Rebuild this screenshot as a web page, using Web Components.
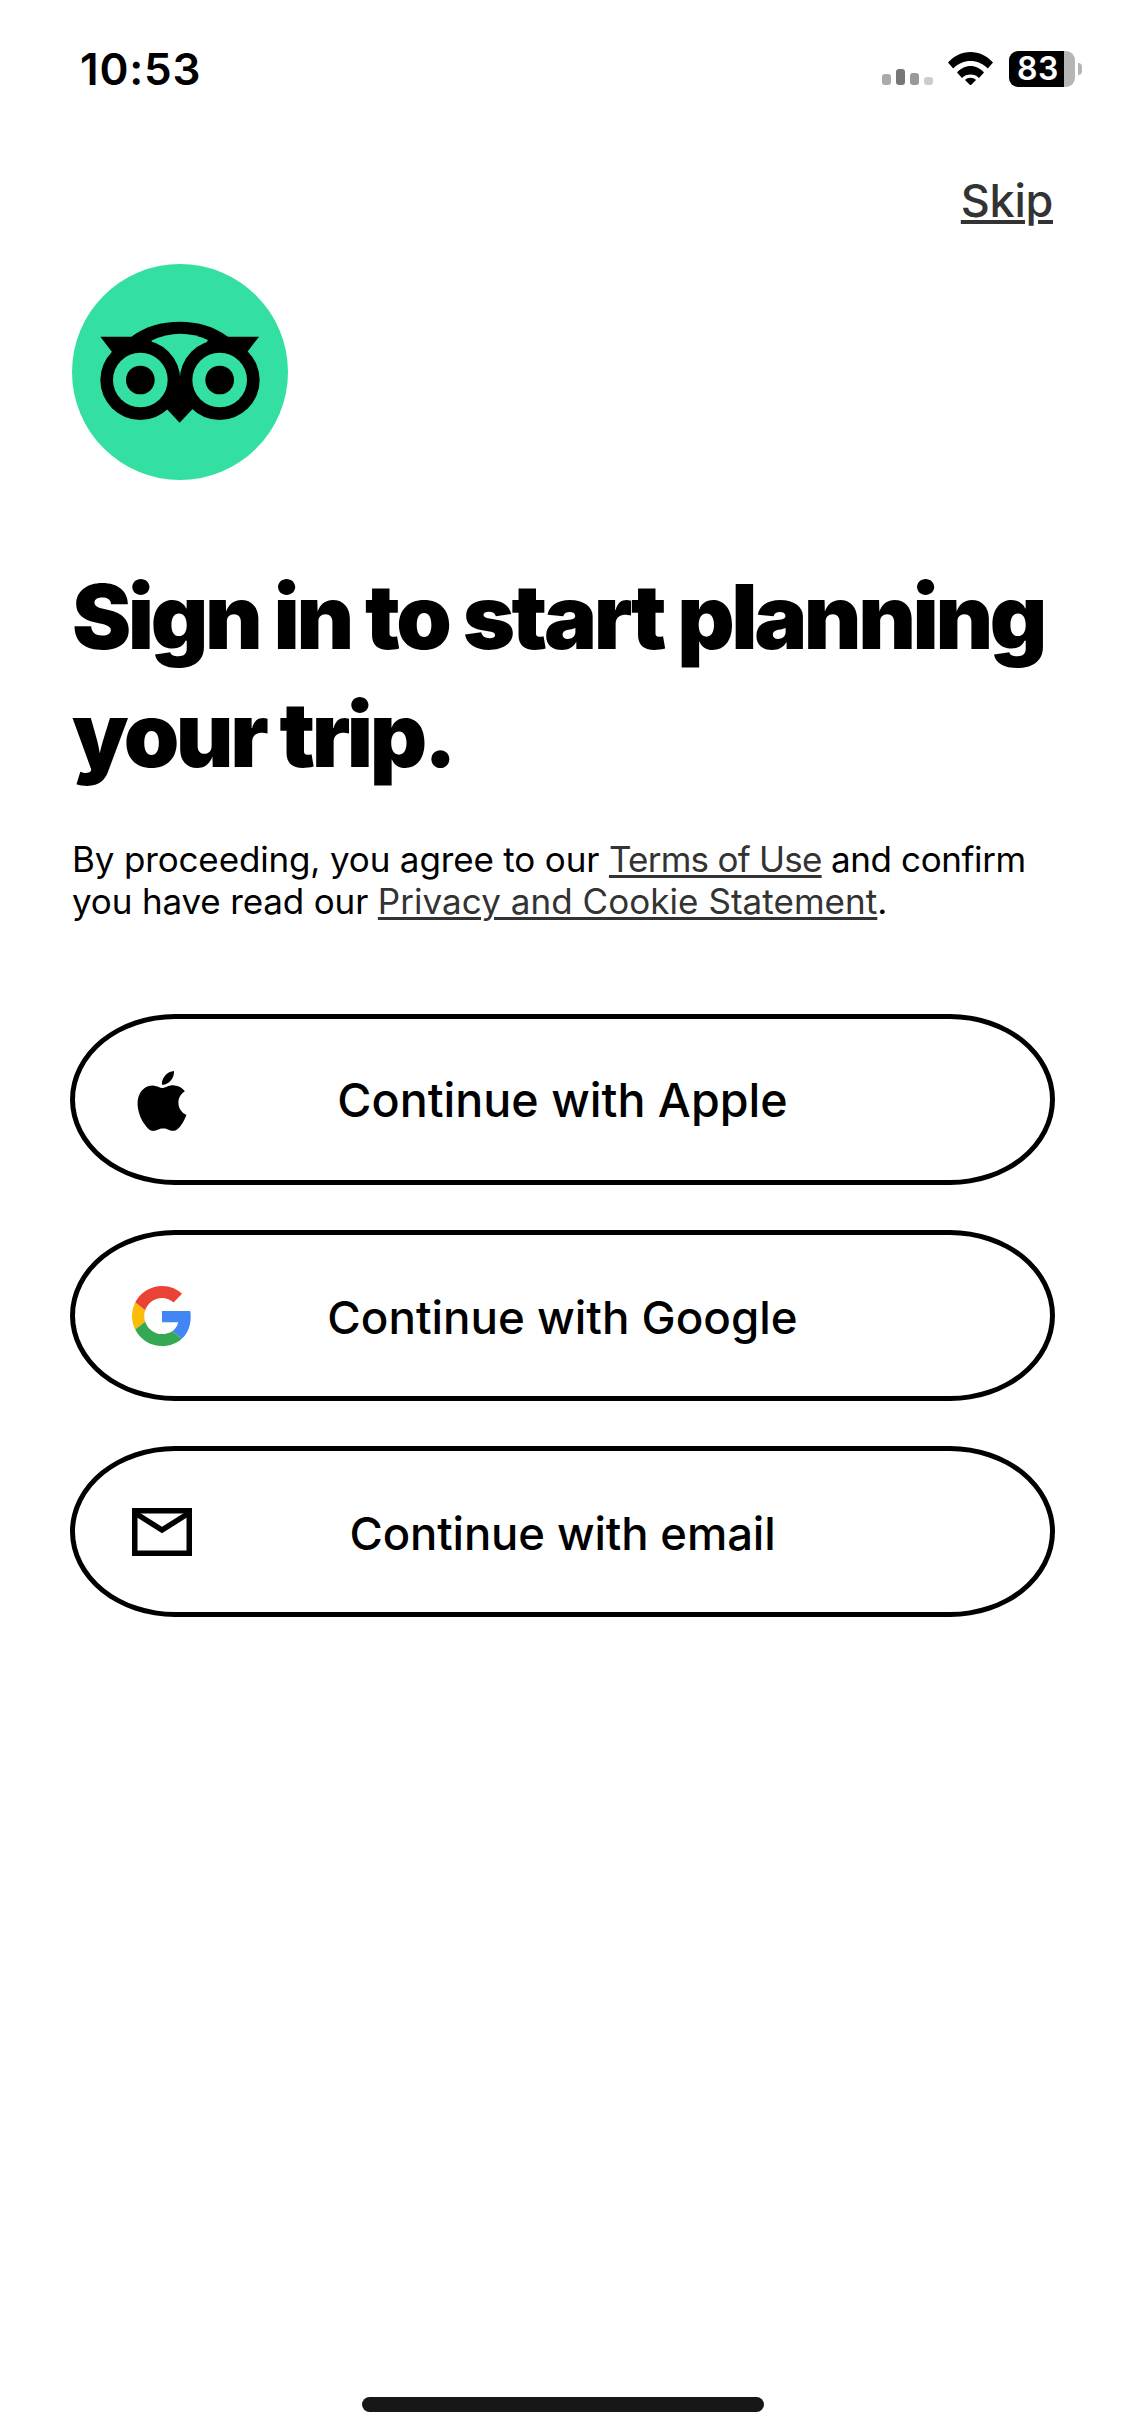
<!DOCTYPE html>
<html lang="en"><head><meta charset="utf-8"><title>Sign in</title>
<style>
html,body{margin:0;padding:0;background:#fff}
body{font-family:Inter,"Noto Sans",sans-serif;color:#000}
a{color:#333;text-decoration:underline;text-decoration-thickness:3px;text-underline-offset:3px}
a.t{letter-spacing:-.75px}
a.p{letter-spacing:.05px}
.c{letter-spacing:-.4px}
</style></head><body>
<signin-screen>
  <status-bar slot="status" time="10:53" level="83"></status-bar>
  <skip-link slot="skip">Skip</skip-link>
  <brand-logo slot="logo"></brand-logo>
  <screen-title slot="title">Sign in to start planning<br>your trip.</screen-title>
  <legal-note slot="legal">By proceeding, you agree to our <a class="t" href="#">Terms of Use</a><span class="c"> and confirm</span><br>you have read our <a class="p" href="#">Privacy and Cookie Statement</a>.</legal-note>
  <auth-button slot="actions" icon="apple" style="--size:46.600px;--weight:450;--track:0px">Continue with Apple</auth-button>
  <auth-button slot="actions" icon="google" style="--size:45.700px;--track:0px;--drop:4px">Continue with Google</auth-button>
  <auth-button slot="actions" icon="mail" style="--size:45.400px;--track:-.1px;--drop:4px">Continue with email</auth-button>
  <home-indicator slot="home"></home-indicator>
</signin-screen>
<script>
function shadow(el,html){el.attachShadow({mode:'open'}).innerHTML=html;}
customElements.define('signin-screen',class extends HTMLElement{constructor(){super();shadow(this,`<style>
:host{display:flex;flex-direction:column;width:1125px;height:2436px;box-sizing:border-box;background:#fff;overflow:hidden}
.content{display:flex;flex-direction:column;padding:0 70px}
.actions{display:flex;flex-direction:column;gap:45px;margin-top:92px}
.home{margin-top:auto;display:flex;justify-content:center;padding-bottom:24px}
</style>
<slot name="status"></slot>
<div class="content">
<slot name="skip"></slot><slot name="logo"></slot><slot name="title"></slot><slot name="legal"></slot>
<div class="actions"><slot name="actions"></slot></div>
</div>
<div class="home"><slot name="home"></slot></div>`);}});

customElements.define('status-bar',class extends HTMLElement{constructor(){super();shadow(this,`<style>
:host{display:flex;align-items:flex-start;justify-content:space-between;height:100px;box-sizing:border-box;padding:48px 43px 0 80px}
.time{font:600 44px/42px Inter,sans-serif;letter-spacing:.8px}
.right{display:flex;align-items:flex-start;padding-top:4px}
.bars{display:flex;align-items:flex-end;gap:5px;height:33px;margin-right:15px}
.bars i{display:block;width:9px;border-radius:3px}
svg{display:block}
.batt{margin:-1px 0 0 16px;display:flex;align-items:center;}
.cell{width:66px;height:36px;border-radius:9px;box-sizing:border-box;background:linear-gradient(90deg,#000 0 55px,#b5b5b5 55px);color:#fff;font:600 32px/36px Inter,sans-serif;padding-left:8px;letter-spacing:.5px}
.cap{width:4px;height:12px;margin-left:3px;background:#b5b5b5;border-radius:0 4px 4px 0}
</style>
<div class="time">${this.getAttribute('time')}</div>
<div class="right">
<div class="bars"><i style="height:11px;background:#aaa"></i><i style="height:16px;background:#777"></i><i style="height:12px;background:#999"></i><i style="height:8px;background:#ccc"></i></div>
<svg width="45" height="33" viewBox="0 0 45 33"><path d="M0 10.5C6 4 14 0 22.5 0S39 4 45 10.5l-5.2 6C35 11.500 29 9 22.500 9S10 11.500 5.200 16.500Z"/><path d="M9 20.500C12.500 16.500 17.500 14 22.500 14S32.500 16.500 36 20.500l-5 5.500C28.800 23.500 25.800 22.500 22.500 22.500S16.200 23.500 14 26Z"/><path d="M17 28C18.500 26.500 20.500 25.800 22.500 25.800S26.500 26.500 28 28L22.500 33.500Z"/></svg>
<div class="batt"><div class="cell">${this.getAttribute('level')}</div><div class="cap"></div></div>
</div>`);}});

customElements.define('skip-link',class extends HTMLElement{constructor(){super();shadow(this,`<style>
:host{display:flex;justify-content:flex-end;height:164px;padding-right:2px;box-sizing:border-box;padding-top:72px}
span{font:500 45px/58px Inter,sans-serif;color:#333;letter-spacing:-.3px;text-decoration:underline;text-decoration-thickness:4px;text-underline-offset:3px}
</style><span><slot></slot></span>`);}});

customElements.define('brand-logo',class extends HTMLElement{constructor(){super();shadow(this,`<style>
:host{display:block;margin-left:2px;width:216px;height:216px}svg{display:block}
</style><svg width="216" height="216" viewBox="67 42 648 648">
<circle cx="391" cy="366" r="324" fill="#34e0a1"/>
<path d="M152 260H245C285 230 335 215 390 215S495 230 535 260H628L590 310H190Z"/>
<path d="M305 272Q390 232 475 270L390 410Z" fill="#34e0a1"/>
<path d="M345 470L390 518L435 470V380H345Z"/>
<circle cx="272" cy="390" r="120"/><circle cx="510" cy="390" r="120"/>
<circle cx="272" cy="390" r="82" fill="#34e0a1"/><circle cx="510" cy="390" r="82" fill="#34e0a1"/>
<circle cx="272" cy="390" r="43"/><circle cx="510" cy="390" r="43"/>
</svg>`);}});

customElements.define('screen-title',class extends HTMLElement{constructor(){super();shadow(this,`<style>
:host{display:block;margin:78px 0 0 2px}
h1{margin:0;font:900 89px/118px Inter,sans-serif;letter-spacing:-3.450px;color:#000;white-space:nowrap}
</style><h1><slot></slot></h1>`);}});

customElements.define('legal-note',class extends HTMLElement{constructor(){super();shadow(this,`<style>
:host{display:block;margin:44px 0 0 2px;font:400 35px/42px Inter,sans-serif;color:#000;white-space:nowrap;letter-spacing:-.15px}
</style><slot></slot>`);}});

const ICONS={
apple:`<svg width="68" height="66" viewBox="0 0 24 23.300"><path d="M12.152 6.896c-.948 0-2.415-1.078-3.96-1.04-2.04.027-3.91 1.183-4.961 3.014-2.117 3.675-.546 9.103 1.519 12.09 1.013 1.454 2.208 3.09 3.792 3.039 1.52-.065 2.09-.987 3.935-.987 1.831 0 2.35.987 3.96.948 1.637-.026 2.676-1.48 3.676-2.948 1.156-1.688 1.636-3.325 1.662-3.415-.039-.013-3.182-1.221-3.22-4.857-.026-3.04 2.48-4.494 2.597-4.559-1.429-2.09-3.623-2.324-4.39-2.376-2-.156-3.675 1.09-4.61 1.09zM15.53 3.83c.843-1.012 1.4-2.427 1.245-3.83-1.207.052-2.662.805-3.532 1.818-.78.896-1.454 2.338-1.273 3.714 1.338.104 2.715-.688 3.559-1.701"/></svg>`,
google:`<svg width="60" height="60" viewBox="0 0 48 48"><path fill="#EA4335" d="M24 9.500c3.540 0 6.710 1.220 9.210 3.600l6.850-6.850C35.900 2.380 30.470 0 24 0 14.620 0 6.510 5.380 2.560 13.220l7.980 6.190C12.430 13.720 17.740 9.500 24 9.500z"/><path fill="#4285F4" d="M46.980 24.550c0-1.570-.15-3.090-.38-4.550H24v9.020h12.940c-.58 2.960-2.260 5.480-4.780 7.180l7.730 6c4.510-4.180 7.090-10.360 7.090-17.650z"/><path fill="#FBBC05" d="M10.530 28.590c-.48-1.450-.76-2.990-.76-4.590s.27-3.140.76-4.590l-7.980-6.190C.92 16.460 0 20.120 0 24c0 3.880.92 7.540 2.560 10.780l7.970-6.190z"/><path fill="#34A853" d="M24 48c6.480 0 11.930-2.130 15.890-5.810l-7.730-6c-2.150 1.450-4.920 2.300-8.160 2.300-6.260 0-11.570-4.220-13.470-9.910l-7.980 6.190C6.510 42.620 14.620 48 24 48z"/></svg>`,
mail:`<svg width="60" height="48" viewBox="0 0 60 48" fill="none" stroke="#000" stroke-width="5.500"><rect x="2.750" y="2.750" width="54.500" height="42.500"/><path d="M3 5L30 22L57 5"/></svg>`};
customElements.define('auth-button',class extends HTMLElement{constructor(){super();shadow(this,`<style>
:host{display:grid;grid-template-columns:1fr auto 1fr;align-items:center;height:171px;box-sizing:border-box;border:5px solid #000;border-radius:105px/85.500px;background:#fff}
.icon{display:flex;justify-content:center;width:60px;margin-left:57px}svg{display:block}
.label{font:var(--weight,500) var(--size,46px)/56px Inter,sans-serif;color:#000;letter-spacing:var(--track,0);white-space:nowrap;padding-top:var(--drop,0)}
</style><div class="icon">${ICONS[this.getAttribute('icon')]}</div><div class="label"><slot></slot></div><div></div>`);}});

customElements.define('home-indicator',class extends HTMLElement{constructor(){super();shadow(this,`<style>
:host{display:block;width:402px;height:15px;border-radius:8px;background:#171717}
</style>`);}});
</script>
</body></html>
